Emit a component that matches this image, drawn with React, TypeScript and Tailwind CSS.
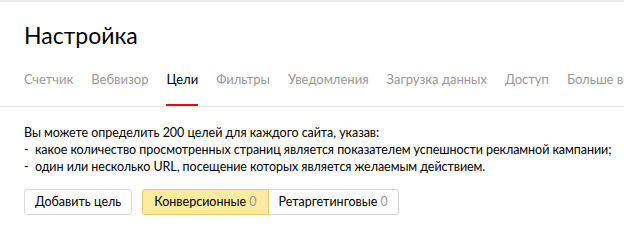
import React from 'react';

const tabs = ['Счетчик', 'Вебвизор', 'Цели', 'Фильтры', 'Уведомления', 'Загрузка данных', 'Доступ', 'Больше возможностей'];

const App: React.FC = () => {
  return (
    <div className="w-[624px] h-[238px] overflow-hidden bg-white border-t-2 border-[#f0f0f0] font-['Lato',sans-serif] text-black">
      <h1 className="pl-6 pt-[19px] text-[23px] leading-[28px] font-normal">Настройка</h1>
      <div className="mt-[21px] border-b border-[#ececec]">
        <div className="flex gap-[18px] pl-6 whitespace-nowrap">
          {tabs.map((t) => (
            <div
              key={t}
              className={
                t === 'Цели'
                  ? 'pb-[16px] text-[13px] leading-[18px] text-black border-b-2 border-[#f00]'
                  : 'pb-[18px] text-[13px] leading-[18px] text-[#999]'
              }
            >
              {t}
            </div>
          ))}
        </div>
      </div>
      <div className="pl-6 pt-[17px] text-[12.5px] leading-[17px] tracking-[-0.05px] whitespace-nowrap">
        <p>Вы можете определить 200 целей для каждого сайта, указав:</p>
        <p>-&nbsp; какое количество просмотренных страниц является показателем успешности рекламной кампании;</p>
        <p>-&nbsp; один или несколько URL, посещение которых является желаемым действием.</p>
      </div>
      <div className="flex items-center gap-[10px] pl-6 pt-[14px] text-[12.5px]">
        <button className="h-[26px] px-[10px] rounded-[3px] border border-[#d9d9d9] bg-white">Добавить цель</button>
        <div className="flex">
          <button className="h-[26px] px-[11px] rounded-l-[3px] border border-[#e5cb6d] bg-[#ffeba0]">
            Конверсионные <span className="text-[#999]">0</span>
          </button>
          <button className="h-[26px] px-[10px] rounded-r-[3px] border border-l-0 border-[#d9d9d9] bg-white">
            Ретаргетинговые <span className="text-[#999]">0</span>
          </button>
        </div>
      </div>
    </div>
  );
};

export default App;
